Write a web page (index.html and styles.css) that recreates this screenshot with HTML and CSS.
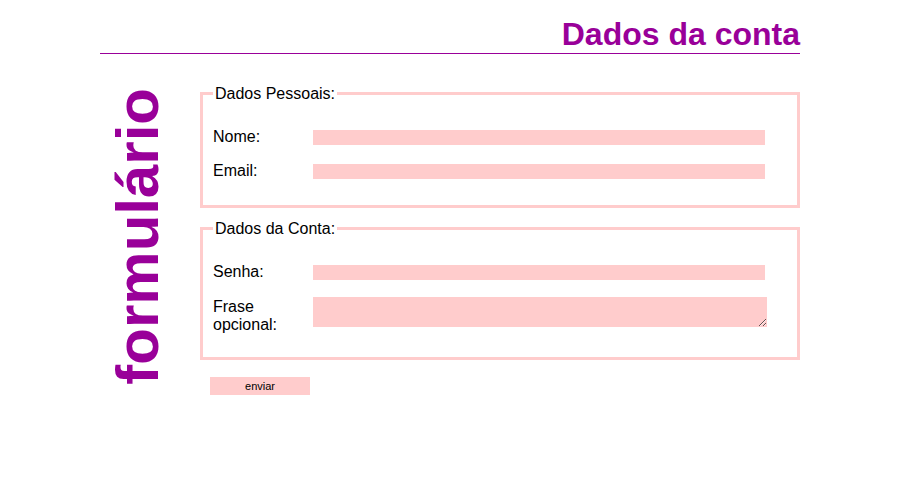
FILE: index.html
```html
<!DOCTYPE html>
<html lang="pt">
<head>
<meta charset="utf-8">
<title>Dados da conta</title>
<link rel="stylesheet" href="styles.css">
</head>
<body>
<div class="page">
  <h1 class="page-title">Dados da conta</h1>
  <div class="main">
    <div class="side">
      <div class="side-title">formulário</div>
    </div>
    <form class="form">
      <fieldset class="group group-personal">
        <legend class="group-legend">Dados Pessoais:</legend>
        <div class="row">
          <label class="row-label" for="nome">Nome:</label>
          <input class="field" id="nome" type="text">
        </div>
        <div class="row row-last">
          <label class="row-label" for="email">Email:</label>
          <input class="field" id="email" type="text">
        </div>
      </fieldset>
      <fieldset class="group group-account">
        <legend class="group-legend">Dados da Conta:</legend>
        <div class="row row-senha">
          <label class="row-label" for="senha">Senha:</label>
          <input class="field" id="senha" type="password">
        </div>
        <div class="row row-last">
          <label class="row-label" for="frase">Frase opcional:</label>
          <textarea class="area" id="frase"></textarea>
        </div>
      </fieldset>
      <button class="submit" type="submit">enviar</button>
    </form>
  </div>
</div>
</body>
</html>
```
FILE: styles.css
```css
html, body {
  margin: 0;
  padding: 0;
  background: #fff;
}

body {
  font-family: "Liberation Sans", Arial, Helvetica, sans-serif;
  color: #000;
}

.page {
  width: 700px;
  margin: 0 0 0 100px;
}

.page-title {
  margin: 16px 0 30px;
  padding: 0;
  font-size: 32px;
  line-height: 37px;
  font-weight: bold;
  color: #990099;
  text-align: right;
  border-bottom: 1px solid #990099;
}

.main {
  display: flex;
  align-items: flex-start;
}

.side {
  flex: none;
  width: 100px;
  padding: 4px 0 0 3px;
  box-sizing: border-box;
  display: flex;
  align-items: flex-start;
}

.side-title {
  writing-mode: vertical-rl;
  transform: rotate(180deg);
  font-size: 60px;
  line-height: 69px;
  font-weight: bold;
  color: #990099;
  white-space: nowrap;
}

.form {
  flex: none;
  width: 600px;
  margin: 0;
}

.group {
  margin: 0;
  width: 600px;
  box-sizing: border-box;
  border: 3px solid #ffcccc;
  padding: 24px 10px 25px;
  min-inline-size: 0;
}

.group-account {
  margin-top: 11px;
  padding-bottom: 23px;
}

.group-legend {
  padding: 0 2px;
  font-size: 16px;
  line-height: 19px;
}

.row {
  display: flex;
  align-items: flex-start;
  margin-bottom: 15px;
}

.row-senha {
  margin-bottom: 16px;
}

.row-last {
  margin-bottom: 0;
}

.row-label {
  flex: none;
  width: 100px;
  padding-top: 1px;
  font-size: 16px;
  line-height: 18px;
}

.field {
  display: block;
  flex: none;
  width: 452px;
  height: 15px;
  margin: 3px 0 0;
  padding: 0;
  border: 0;
  background: #ffcccc;
  box-sizing: border-box;
  outline: none;
}

.area {
  display: block;
  flex: none;
  width: 454px;
  height: 30px;
  margin: 0;
  padding: 0;
  border: 0;
  background: #ffcccc;
  box-sizing: border-box;
  outline: none;
  font-family: inherit;
}

.submit {
  display: block;
  margin: 17px 0 0 10px;
  width: 100px;
  height: 18px;
  padding: 0;
  border: 0;
  background: #ffcccc;
  font-family: "Liberation Sans", Arial, sans-serif;
  font-size: 11px;
  line-height: 18px;
  color: #000;
}
```
